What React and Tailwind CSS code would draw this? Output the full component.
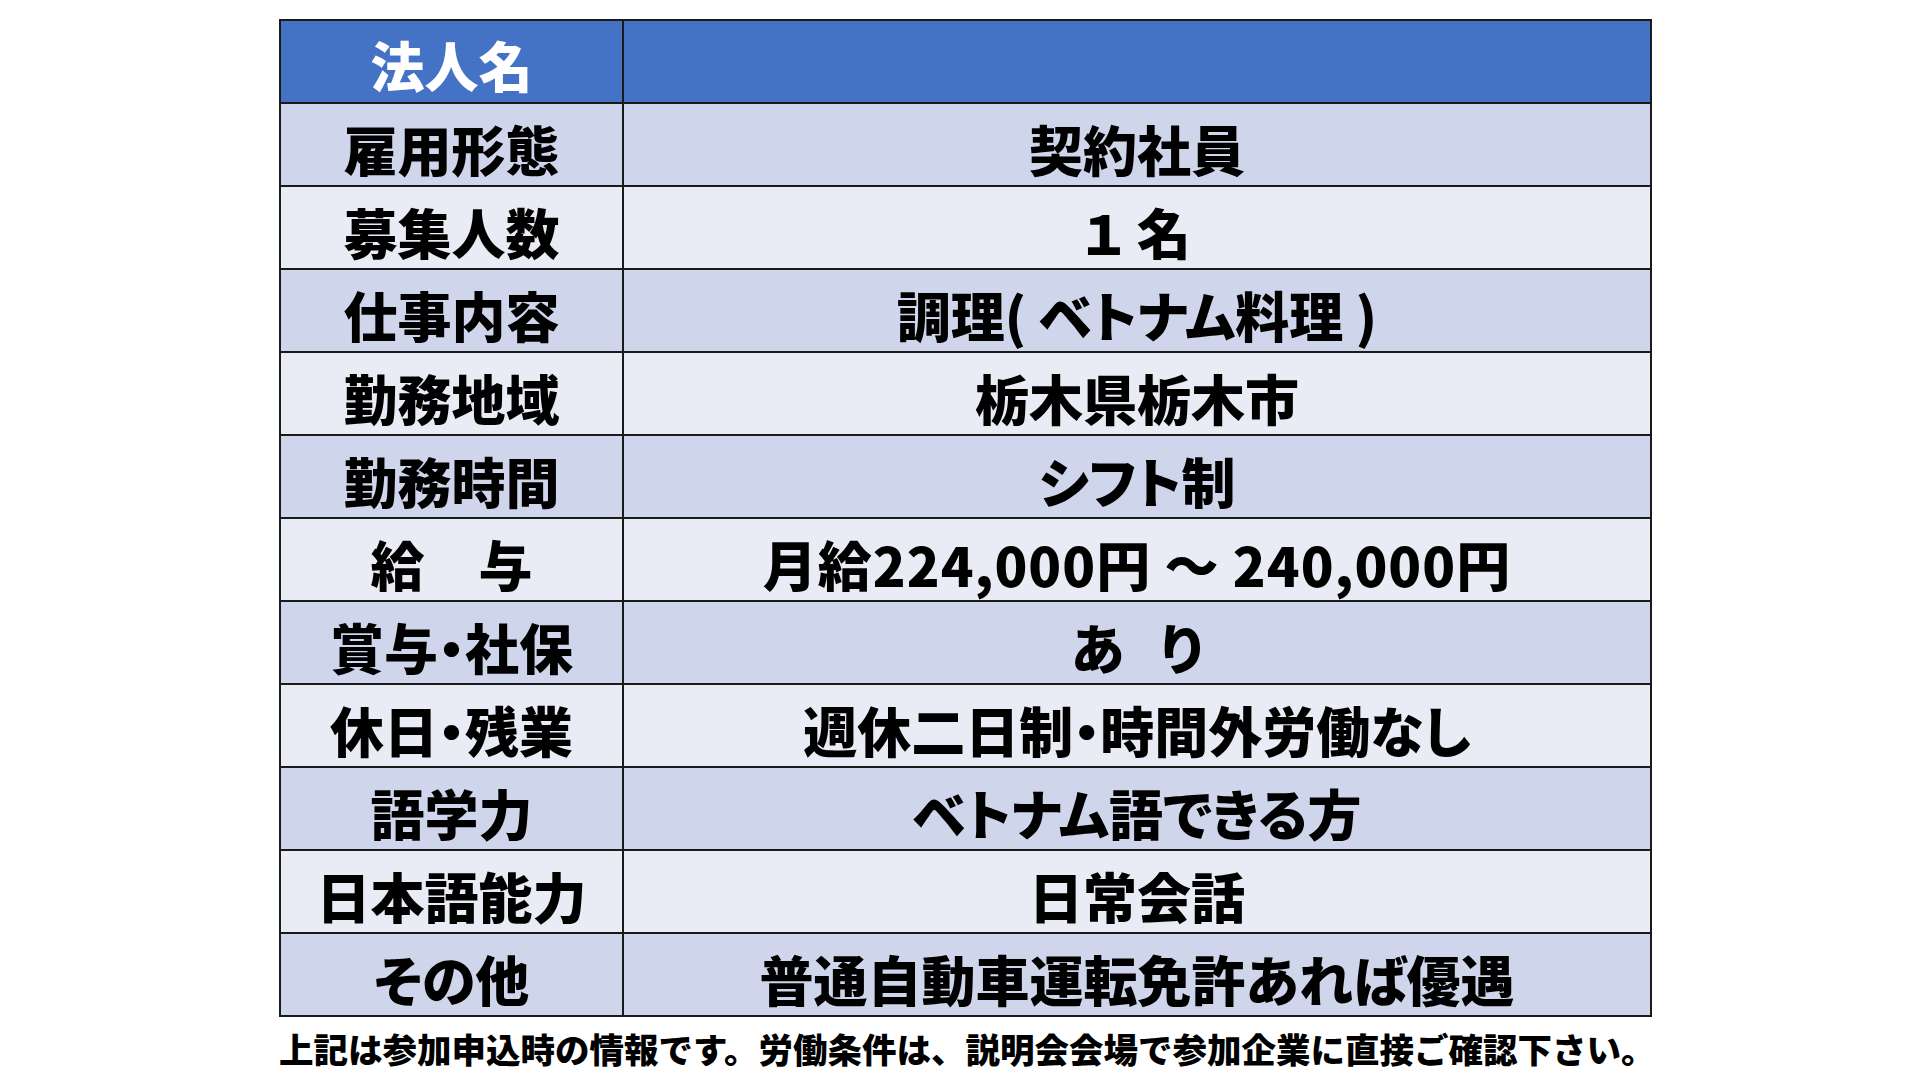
const rows = [
  ["雇用形態", "契約社員"],
  ["募集人数", "１ 名"],
  ["仕事内容", "調理( ベトナム料理 )"],
  ["勤務地域", "栃木県栃木市"],
  ["勤務時間", "シフト制"],
  ["給　与", "月給224,000円 ～ 240,000円", true],
  ["賞与・社保", <>あ<span className="inline-block w-[36px]" />り</>],
  ["休日・残業", "週休二日制・時間外労働なし"],
  ["語学力", "ベトナム語できる方"],
  ["日本語能力", "日常会話"],
  ["その他", "普通自動車運転免許あれば優遇"],
];

const font = { fontFamily: '"Noto Sans CJK JP", "Noto Sans", sans-serif' };

export default function App() {
  return (
    <div className="w-[1920px] h-[1080px] bg-white overflow-hidden" style={font}>
      <div className="ml-[279px] pt-[19px] w-[1373px]">
        <div className="grid grid-cols-[343px_1fr] border-2 border-[#1a1a1a] border-b-0">
          {/* header row */}
          <div className="h-[83px] bg-[#4472c4] border-r-2 border-b-2 border-[#1a1a1a] flex items-center justify-center pt-[6px] text-white text-[54px] font-black leading-none">
            法人名
          </div>
          <div className="h-[83px] bg-[#4472c4] border-b-2 border-[#1a1a1a]" />
          {rows.map(([label, value, wide], i) => {
            const bg = i % 2 === 0 ? "bg-[#cfd5ea]" : "bg-[#e9ebf5]";
            return [
              <div
                key={label}
                className={`h-[83px] ${bg} border-r-2 border-b-2 border-[#1a1a1a] flex items-center justify-center pt-[8px] text-black text-[54px] font-black leading-none whitespace-nowrap [font-feature-settings:'palt']`}
              >
                {label}
              </div>,
              <div
                key={label + "v"}
                className={`h-[83px] ${bg} border-b-2 border-[#1a1a1a] flex items-center justify-center pt-[8px] text-black text-[54px] font-black leading-none whitespace-nowrap ${wide ? "tracking-[1px]" : "[font-feature-settings:'palt']"}`}
              >
                {value}
              </div>,
            ];
          })}
        </div>
        <p className="mt-[14px] text-[34.5px] font-black leading-none text-black whitespace-nowrap">
          上記は参加申込時の情報です。労働条件は、説明会会場で参加企業に直接ご確認下さい。
        </p>
      </div>
    </div>
  );
}
